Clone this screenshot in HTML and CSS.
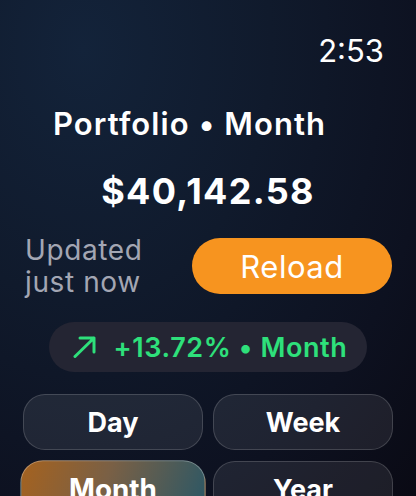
FILE: index.html
```html
<!DOCTYPE html>
<html>
<head>
    <title>Portfolio</title>
    <link rel="stylesheet" href="styles.css">
</head>
<body>
    <div class="screen">
        <div class="status">2:53</div>
        <h1 class="title">Portfolio &bull; Month</h1>
        <div class="amount">$40,142.58</div>
        <div class="update-row">
            <div class="updated">Updated<br>just now</div>
            <button class="reload">Reload</button>
        </div>
        <div class="change">
            <svg class="arrow" width="24" height="22" viewBox="0 0 24 22">
                <path d="M2 20.5 L21 2 M7 2 H21 V16" fill="none" stroke="#2ee07b" stroke-width="3" stroke-linecap="round" stroke-linejoin="round"/>
            </svg>
            <span>+13.72% &bull; Month</span>
        </div>
        <div class="ranges">
            <button class="range">Day</button>
            <button class="range">Week</button>
            <button class="range selected">Month</button>
            <button class="range">Year</button>
        </div>
    </div>
</body>
</html>
```

FILE: styles.css
```css
html, body {
    margin: 0;
    padding: 0;
}
body {
    font-family: 'Inter', 'Noto Sans', sans-serif;
    background: #0c0d1a;
    color: white;
    width: 416px;
    height: 496px;
    overflow: hidden;
}
.screen {
    height: 496px;
    box-sizing: border-box;
    padding: 32px 23px 0 23px;
    display: flex;
    flex-direction: column;
    background: radial-gradient(ellipse at 20% 10%, #13233a 0%, #101a2c 40%, #0d1120 75%, #0a0a14 100%);
}
.screen > * {
    flex-shrink: 0;
}
.status {
    align-self: flex-end;
    font-size: 31px;
    margin-right: 9px;
    line-height: 38px;
}
.title {
    margin: 34px 0 0 0;
    padding-left: 30px;
    font-size: 31px;
    font-weight: 600;
    text-align: left;
    letter-spacing: 1.1px;
    line-height: 40px;
}
.amount {
    margin-top: 25px;
    font-size: 36px;
    font-weight: 700;
    text-align: center;
    letter-spacing: 1.3px;
    line-height: 44px;
}
.update-row {
    display: flex;
    justify-content: space-between;
    align-items: center;
    margin-top: 21px;
}
.updated {
    font-size: 28px;
    line-height: 32px;
    letter-spacing: 0.6px;
    color: #a3a6b3;
    margin-left: 2px;
}
.reload {
    width: 200px;
    height: 56px;
    margin-right: 1px;
    border: none;
    border-radius: 28px;
    background: #f7941f;
    color: white;
    font-family: inherit;
    font-size: 31px;
    letter-spacing: 0.5px;
}
.change {
    align-self: center;
    display: flex;
    align-items: center;
    gap: 17px;
    margin-top: 24px;
    height: 50px;
    padding: 0 20px 0 24px;
    border-radius: 25px;
    background: #242533;
    color: #2ee07b;
    font-size: 27px;
    font-weight: 600;
    letter-spacing: 0.6px;
}
.ranges {
    display: grid;
    grid-template-columns: 180px 180px;
    gap: 11px 10px;
    margin-top: 22px;
}
.range {
    height: 56px;
    border-radius: 22px;
    border: 1px solid rgba(255, 255, 255, 0.16);
    background: rgba(255, 255, 255, 0.08);
    color: white;
    font-family: inherit;
    font-size: 27px;
    font-weight: 700;
}
.selected {
    background: linear-gradient(110deg, #a5621f 0%, #7a6045 45%, #2a5766 100%);
    border-color: rgba(255, 255, 255, 0.3);
    transform: scale(1.03);
}
```
